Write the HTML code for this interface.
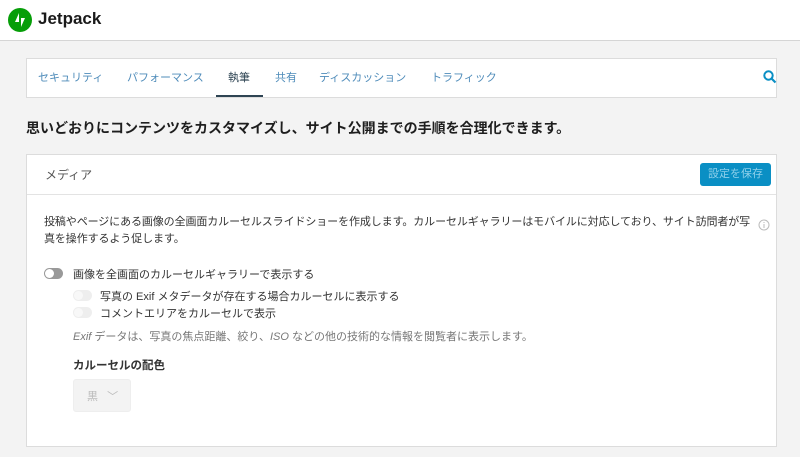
<!DOCTYPE html><html><head><meta charset="utf-8"><style>
*{box-sizing:border-box;margin:0;padding:0}
body{width:800px;height:457px;overflow:hidden;background:#f3f3f3;font-family:"Liberation Sans","Noto Sans CJK JP",sans-serif;color:#2e4453;position:relative}
.hd{position:absolute;left:0;top:0;width:800px;height:41px;background:#fff;border-bottom:1px solid #d5d5d5}
.logo{position:absolute;left:8px;top:8px;width:24px;height:24px;border-radius:50%;background:#069e08}
.brand{position:absolute;left:38px;top:9px;font-size:17px;font-weight:bold;color:#1a1a1a}
.nav{position:absolute;left:26px;top:58px;width:751px;height:40px;background:#fff;border:1px solid #dcdcdc}
.nav span{position:absolute;top:10px;font-size:11px;color:#4f8cba}
.nav .a{color:#2e4453}
.ul{position:absolute;left:189px;top:36px;width:47px;height:2px;background:#2e4453}
h1{position:absolute;left:26px;top:118px;font-size:14px;font-weight:bold;color:#1e1e1e}
.card{position:absolute;left:26px;top:154px;width:751px;height:293px;background:#fff;border:1px solid #dcdcdc}
.ch{height:40px;border-bottom:1px solid #e3e3e3;position:relative}
.ch span{position:absolute;left:18px;top:11px;font-size:12px;color:#555}
.btn{position:absolute;left:673px;top:8px;width:71px;height:23px;background:#0a8fc4;border-radius:3px;color:#8fd0ea;font-size:11px;text-align:center;line-height:23px}
.t{position:absolute;font-size:11px;color:#333;white-space:nowrap}
.tg{position:absolute;width:19px;height:11px;border-radius:6px;background:#999}
.tg::after{content:"";position:absolute;left:1px;top:1px;width:9px;height:9px;border-radius:50%;background:#fff}
.tg.l{background:#eee}
.tg.l::after{background:#f8f8f8}
.sel{position:absolute;left:46px;top:224px;width:58px;height:33px;background:#f3f3f3;border:1px solid #eee;border-radius:3px;font-size:11px;color:#bbb;padding:8px 0 0 13px}
</style></head><body>
<div class="hd"><div class="logo"><svg width="24" height="24" viewBox="0 0 24 24"><path d="M11 5v9H7z M13 19v-9h4z" fill="#fff"/></svg></div><div class="brand">Jetpack</div></div>
<div class="nav"><span style="left:11px">セキュリティ</span><span style="left:100px">パフォーマンス</span><span class="a" style="left:201px">執筆</span><span style="left:248px">共有</span><span style="left:292px">ディスカッション</span><span style="left:404px">トラフィック</span><div class="ul"></div>
<svg style="position:absolute;left:736px;top:11px" width="14" height="14" viewBox="0 0 14 14"><circle cx="5.5" cy="5.5" r="4.2" fill="none" stroke="#0a8fc4" stroke-width="2"/><path d="M8.5 8.5l4 4" stroke="#0a8fc4" stroke-width="2.2"/></svg></div>
<h1>思いどおりにコンテンツをカスタマイズし、サイト公開までの手順を合理化できます。</h1>
<div class="card"><div class="ch"><span>メディア</span><div class="btn">設定を保存</div></div>
<div class="t" style="left:17px;top:59px;line-height:17px;letter-spacing:-0.1px">投稿やページにある画像の全画面カルーセルスライドショーを作成します。カルーセルギャラリーはモバイルに対応しており、サイト訪問者が写<br>真を操作するよう促します。</div>
<svg style="position:absolute;left:731px;top:64px" width="12" height="12" viewBox="0 0 12 12"><circle cx="6" cy="6" r="5" fill="none" stroke="#bbb"/><path d="M6 5v4M6 3v1" stroke="#bbb"/></svg>
<div class="tg" style="left:17px;top:113px"></div><div class="t" style="left:46px;top:111px">画像を全画面のカルーセルギャラリーで表示する</div>
<div class="tg l" style="left:46px;top:135px"></div><div class="t" style="left:73px;top:133px">写真の Exif メタデータが存在する場合カルーセルに表示する</div>
<div class="tg l" style="left:46px;top:152px"></div><div class="t" style="left:73px;top:150px">コメントエリアをカルーセルで表示</div>
<div class="t" style="left:46px;top:173px;color:#777"><i>Exif</i> データは、写真の焦点距離、絞り、<i>ISO</i> などの他の技術的な情報を閲覧者に表示します。</div>
<div class="t" style="left:46px;top:202px;font-weight:bold;font-size:11.5px">カルーセルの配色</div>
<div class="sel">黒 &nbsp;&nbsp;﹀</div>
</div>
</body></html>
